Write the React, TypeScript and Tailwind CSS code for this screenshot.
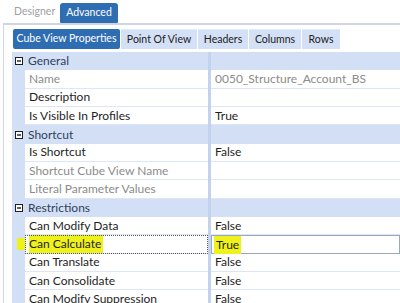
import React from "react";

type Row =
  | { kind: "group"; label: string }
  | { kind: "prop"; label: string; value?: string; dim?: boolean; dimValue?: boolean; focus?: boolean };

const rows: Row[] = [
  { kind: "group", label: "General" },
  { kind: "prop", label: "Name", value: "0050_Structure_Account_BS", dim: true, dimValue: true },
  { kind: "prop", label: "Description" },
  { kind: "prop", label: "Is Visible In Profiles", value: "True" },
  { kind: "group", label: "Shortcut" },
  { kind: "prop", label: "Is Shortcut", value: "False" },
  { kind: "prop", label: "Shortcut Cube View Name", dim: true },
  { kind: "prop", label: "Literal Parameter Values", dim: true },
  { kind: "group", label: "Restrictions" },
  { kind: "prop", label: "Can Modify Data", value: "False" },
  { kind: "prop", label: "Can Calculate", value: "True", focus: true },
  { kind: "prop", label: "Can Translate", value: "False" },
  { kind: "prop", label: "Can Consolidate", value: "False" },
  { kind: "prop", label: "Can Modify Suppression", value: "False" },
];

const tabs = [
  { label: "Cube View Properties", w: "w-[107px]" },
  { label: "Point Of View", w: "w-[76px]" },
  { label: "Headers", w: "w-[50px]" },
  { label: "Columns", w: "w-[52px]" },
  { label: "Rows", w: "w-[38px]" },
];

// small boxed minus used for the collapse toggles
const Collapse = () => (
  <svg width="8" height="8" viewBox="0 0 8 8" className="shrink-0">
    <rect x="0.5" y="0.5" width="7" height="7" fill="#fff" stroke="#1f1f1f" />
    <line x1="2" y1="4" x2="6" y2="4" stroke="#1f1f1f" strokeWidth="1.4" />
  </svg>
);

export default function App() {
  return (
    <div
      className="w-[400px] h-[303px] overflow-hidden bg-white text-[12px] text-[#1e1e1e] whitespace-nowrap"
      style={{ fontFamily: 'Lato, "Open Sans", sans-serif' }}
    >
      {/* Designer / Advanced */}
      <div className="flex items-end h-[23px] pl-[14px] text-[10.5px]">
        <span className="w-[46px] text-[#a0a0a0] pb-[3px]">Designer</span>
        <span className="h-[20px] w-[58px] flex items-center justify-center bg-[#2f6db3] text-white rounded-t-[3px] rounded-b-[1px]">
          Advanced
        </span>
      </div>

      <div className="ml-[3px] h-full border-l-[1.5px] border-t-2 border-[#cfd6e2] pl-[9px] pt-[4px]">
        {/* Sub tabs */}
        <div className="flex gap-[1px] text-[10.5px]">
          {tabs.map((t, i) => (
            <div
              key={t.label}
              className={
                i === 0
                  ? t.w + " h-[20px] flex items-center justify-center bg-[#2f6db3] text-white rounded-[2px]"
                  : t.w + " h-[20px] flex items-center justify-center bg-[#d3e0f5] text-[#222] border-t border-[#e4ecf9]"
              }
            >
              {t.label}
            </div>
          ))}
        </div>

        {/* Property grid */}
        <div className="mt-[3px] -ml-[1px]">
          {rows.map((r) =>
            r.kind === "group" ? (
              <div key={r.label} className="flex h-[18.35px] bg-[#d3dff4]">
                <div className="w-[196px] flex items-center gap-[5px] pl-[3px] text-[#2f3f5c]">
                  <Collapse />
                  {r.label}
                </div>
                <div className="w-[3px] bg-[#c3d3ee]" />
                <div className="flex-1" />
              </div>
            ) : (
              <div key={r.label} className="flex h-[18.35px] bg-[#d3dff4]">
                <div className="w-[13px] relative">
                  {r.focus && <div className="absolute left-[5px] top-[3px] h-[12px] w-[8px] bg-[#eef21a]" />}
                </div>
                <div
                  className={
                    "w-[183px] flex items-center bg-white pl-[4px] border-b border-[#dde6f6] " +
                    (r.focus ? "outline-1 outline-dotted outline-[#555] -outline-offset-1" : "")
                  }
                >
                  <span
                    className={
                      (r.dim ? "text-[#8b8b8b] " : "") + (r.focus ? "bg-[#eef21a] pr-[2px]" : "")
                    }
                  >
                    {r.label}
                  </span>
                </div>
                <div className="w-[3px] bg-[#c3d3ee]" />
                <div
                  className={
                    "flex-1 flex items-center bg-white pl-[4px] " +
                    (r.focus ? "border border-[#9aa8bd]" : "border-b border-[#dde6f6]")
                  }
                >
                  {r.value && (
                    <span
                      className={
                        (r.dimValue ? "text-[#8b8b8b] " : "") + (r.focus ? "bg-[#eef21a] px-[2px] -ml-[2px]" : "")
                      }
                    >
                      {r.value}
                    </span>
                  )}
                </div>
              </div>
            )
          )}
        </div>
      </div>
    </div>
  );
}
